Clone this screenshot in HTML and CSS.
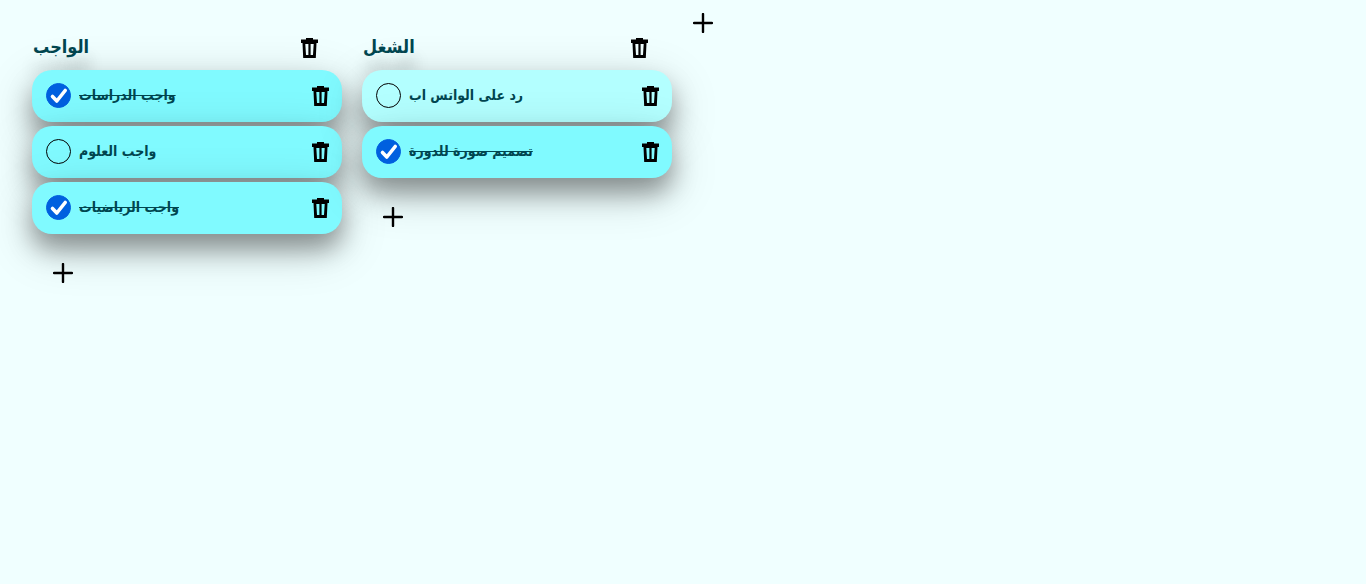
FILE: index.html
```
<!DOCTYPE html>
<html lang="ar">
<head>
<meta charset="utf-8">
<meta name="viewport" content="width=device-width, initial-scale=1">
<title>المهام</title>
<link rel="stylesheet" href="styles.css">
</head>
<body>
<svg class="sprite" aria-hidden="true">
  <symbol id="trash" viewBox="0 0 18 20"><path fill-rule="evenodd" d="M6 0H13V1.500H18V5H16.500L15.800 20H3.200L2.500 5H1V1.500H6ZM5.300 6L6 17H8.400V6ZM10.600 6V17H13L13.700 6Z" /></symbol>
  <symbol id="plus" viewBox="0 0 20 20"><path d="M10 1V19M1 10H19" fill="none" stroke="currentColor" stroke-width="2.400" stroke-linecap="round"/></symbol>
  <symbol id="check" viewBox="0 0 25 25"><path d="M6.500 13.500L10.800 18L19.200 7.500" fill="none" stroke="#fff" stroke-width="3.600" stroke-linecap="round" stroke-linejoin="round"/></symbol>
</svg>
<main class="board">
  <section class="list">
    <header class="list-head">
      <h2 class="list-title">الواجب</h2>
      <button class="icon-button" aria-label="حذف القائمة"><svg class="trash"><use href="#trash"/></svg></button>
    </header>
    <ul class="tasks">
      <li class="task">
        <label class="task-label"><span class="tick"><input type="checkbox" checked><svg><use href="#check"/></svg></span><span class="task-text">واجب الدراسات</span></label>
        <button class="icon-button" aria-label="حذف"><svg class="trash"><use href="#trash"/></svg></button>
      </li>
      <li class="task">
        <label class="task-label"><span class="tick"><input type="checkbox"><svg><use href="#check"/></svg></span><span class="task-text">واجب العلوم</span></label>
        <button class="icon-button" aria-label="حذف"><svg class="trash"><use href="#trash"/></svg></button>
      </li>
      <li class="task">
        <label class="task-label"><span class="tick"><input type="checkbox" checked><svg><use href="#check"/></svg></span><span class="task-text">واجب الرياضيات</span></label>
        <button class="icon-button" aria-label="حذف"><svg class="trash"><use href="#trash"/></svg></button>
      </li>
    </ul>
    <button class="icon-button add-task" aria-label="إضافة مهمة"><svg class="plus"><use href="#plus"/></svg></button>
  </section>
  <section class="list">
    <header class="list-head">
      <h2 class="list-title">الشغل</h2>
      <button class="icon-button" aria-label="حذف القائمة"><svg class="trash"><use href="#trash"/></svg></button>
    </header>
    <ul class="tasks">
      <li class="task task-light">
        <label class="task-label"><span class="tick"><input type="checkbox"><svg><use href="#check"/></svg></span><span class="task-text">رد على الواتس اب</span></label>
        <button class="icon-button" aria-label="حذف"><svg class="trash"><use href="#trash"/></svg></button>
      </li>
      <li class="task">
        <label class="task-label"><span class="tick"><input type="checkbox" checked><svg><use href="#check"/></svg></span><span class="task-text">تصميم صورة للدورة</span></label>
        <button class="icon-button" aria-label="حذف"><svg class="trash"><use href="#trash"/></svg></button>
      </li>
    </ul>
    <button class="icon-button add-task" aria-label="إضافة مهمة"><svg class="plus"><use href="#plus"/></svg></button>
  </section>
  <button class="icon-button add-list" aria-label="إضافة قائمة"><svg class="plus"><use href="#plus"/></svg></button>
</main>
</body>
</html>
```
FILE: styles.css
```
* { box-sizing: border-box; }

body {
  margin: 0;
  background: #f0ffff;
  color: #004650;
  font-family: "DejaVu Sans Condensed", "DejaVu Sans", sans-serif;
}

.sprite { display: none; }

.board {
  display: flex;
  align-items: flex-start;
  gap: 20px;
  padding: 13px 32px;
}

.list {
  flex: 0 1 310px;
  padding-top: 9px;
}

.list-head {
  display: flex;
  align-items: center;
  justify-content: space-between;
  height: 48px;
  padding: 4px 24px 0 1px;
}

.list-title {
  margin: 0;
  padding-bottom: 2px;
  font-size: 18px;
  line-height: 24px;
  text-shadow: 0 19px 16px rgba(0, 0, 0, .3);
}

.tasks {
  display: grid;
  gap: 4px;
  margin: 0;
  padding: 0;
  list-style: none;
}

.task {
  display: flex;
  align-items: center;
  justify-content: space-between;
  height: 52px;
  padding: 0 13px 0 14px;
  border-radius: 20px;
  background: #80faff;
  box-shadow: 0 14px 50px rgba(0, 0, 0, .2), 0 15px 24px rgba(0, 0, 0, .34);
}

.task-light { background: #b3ffff; }

.task-label {
  display: flex;
  align-items: center;
  gap: 8px;
  padding-bottom: 1px;
}

.task-text {
  padding-bottom: 2px;
  font-size: 14px;
  line-height: 20px;
  font-weight: bold;
}

.tick { display: grid; }

.tick input,
.tick svg {
  grid-area: 1 / 1;
  width: 25px;
  height: 25px;
  margin: 0;
}

.tick input {
  appearance: none;
  border: 1px solid #000;
  border-radius: 50%;
}

.tick svg {
  visibility: hidden;
  pointer-events: none;
}

.tick input:checked {
  border-color: #0060df;
  background: #0060df;
}

.tick input:checked + svg { visibility: visible; }

.task-label:has(input:checked) .task-text { text-decoration: line-through 1px; }

.icon-button {
  display: block;
  padding: 0;
  border: 0;
  background: none;
  color: #000;
  cursor: pointer;
}

.icon-button svg { display: block; }

.trash {
  width: 18px;
  height: 20px;
}

.plus {
  width: 20px;
  height: 20px;
}

.add-task { margin: 29px 0 0 21px; }
.add-list { margin-left: 1px; }
```
